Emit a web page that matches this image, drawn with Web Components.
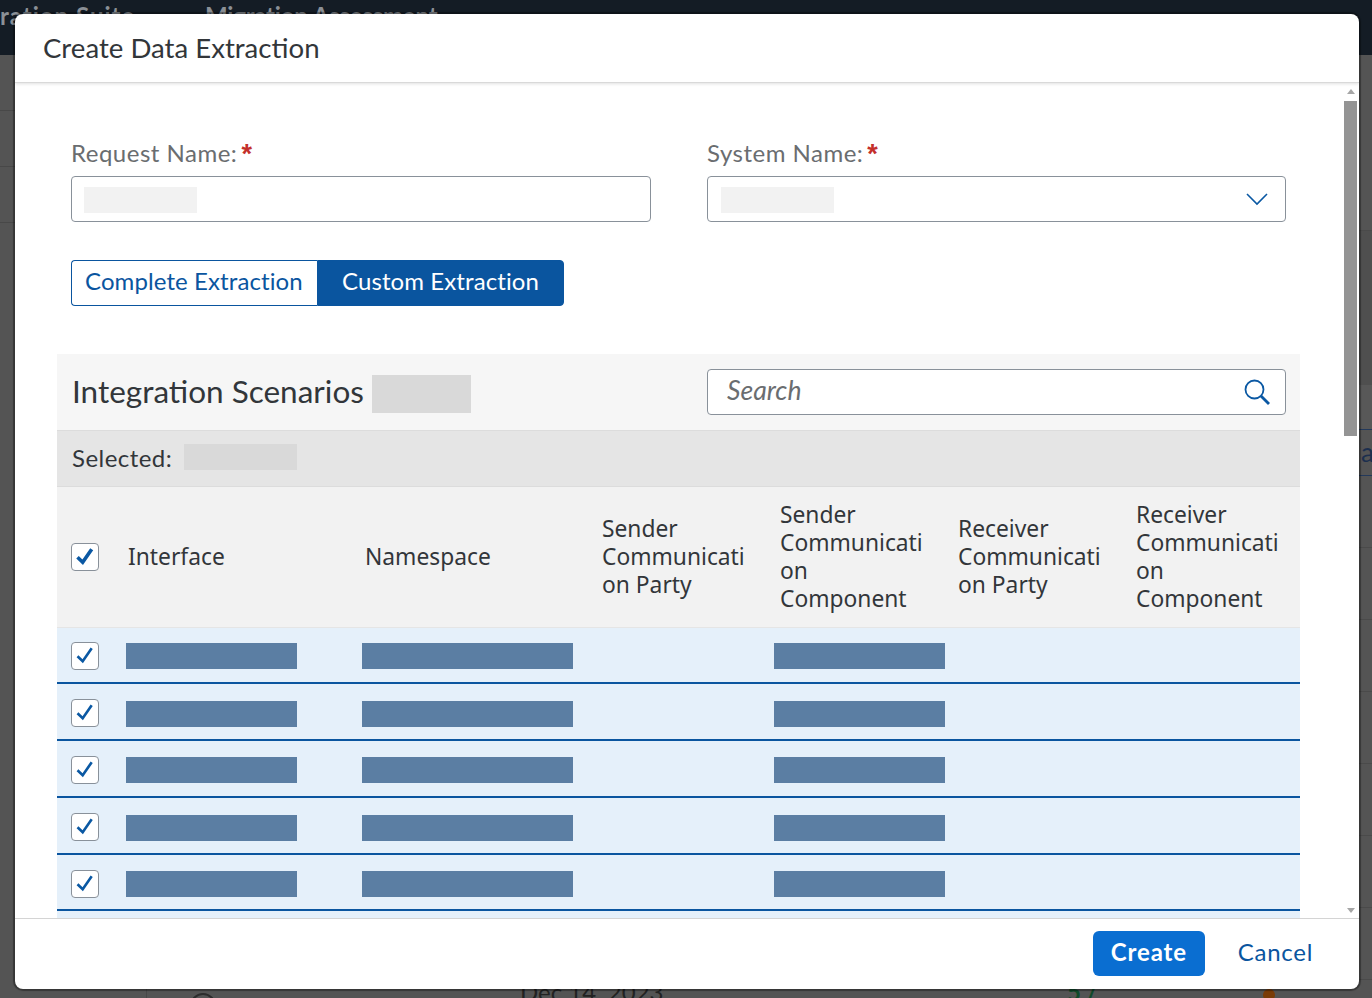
<!DOCTYPE html>
<html lang="en">
<head>
<meta charset="utf-8">
<title>Create Data Extraction</title>
<style>
  html, body { margin: 0; height: 100%; overflow: hidden; background: #545454; }
  body { font-family: Lato, "Noto Sans", sans-serif; color: #32363a; }
</style>
</head>
<body>

<app-backdrop>
  <extract-dialog heading="Create Data Extraction">
    <div>
      <field-row>
        <form-field label="Request Name:"></form-field>
        <form-field label="System Name:" dropdown></form-field>
      </field-row>
      <extract-mode></extract-mode>
      <scenario-table></scenario-table>
    </div>
  </extract-dialog>
</app-backdrop>

<script>
/* Blocked out value, used wherever the screenshot hides data */
class MaskBar extends HTMLElement {
  constructor() {
    super();
    this.attachShadow({ mode: 'open' }).innerHTML = `
      <style>
        :host { display: block; width: 113px; height: 26px; background: #f2f2f2; }
      </style>`;
  }
}

class CheckMark extends HTMLElement {
  constructor() {
    super();
    const weight = this.hasAttribute('bold') ? 3.6 : 2.6;
    this.attachShadow({ mode: 'open' }).innerHTML = `
      <style>
        :host {
          display: block;
          width: 28px; height: 28px;
          box-sizing: border-box;
          background: #fff;
          border: 1px solid #89919a;
          border-radius: 4px;
        }
        svg { display: block; width: 26px; height: 26px; }
      </style>
      <svg viewBox="0 0 26 26"><path d="M5.5 13.2l5.2 5 9-13" fill="none" stroke="#0a58a3" stroke-width="${weight}"/></svg>`;
  }
}

class FieldRow extends HTMLElement {
  constructor() {
    super();
    this.attachShadow({ mode: 'open' }).innerHTML = `
      <style>
        :host {
          display: grid;
          grid-template-columns: 580px 579px;
          gap: 56px;
          padding: 0 0 0 56px;
        }
      </style>
      <slot></slot>`;
  }
}

class FormField extends HTMLElement {
  constructor() {
    super();
    this._shadow = this.attachShadow({ mode: 'open' });
  }

  connectedCallback() {
    const dropdown = this.hasAttribute('dropdown');
    const arrow = dropdown
      ? `<svg viewBox="0 0 24 14"><path d="M2 2l10 10L22 2" fill="none" stroke="#0a58a3" stroke-width="1.6"/></svg>`
      : '';
    this._shadow.innerHTML = `
      <style>
        :host { display: block; }
        .label {
          height: 44px;
          box-sizing: border-box;
          padding-bottom: 4px;
          display: flex;
          align-items: center;
          gap: 4px;
          font-size: 24px;
          letter-spacing: .5px;
          color: #6a6d70;
        }
        .label b {
          color: #c4302b;
          font: 700 27px/1 "Liberation Sans", sans-serif;
          height: 22px;
        }
        .box {
          height: 46px;
          box-sizing: border-box;
          display: flex;
          align-items: center;
          justify-content: space-between;
          padding: 2px 16px 0 ${dropdown ? 13 : 12}px;
          background: #fff;
          border: 1px solid #89919a;
          border-radius: 4px;
        }
        svg { display: block; width: 24px; height: 14px; margin-top: -2px; }
      </style>
      <div class="label">${this.getAttribute('label')}<b>*</b></div>
      <div class="box"><mask-bar></mask-bar>${arrow}</div>`;
  }
}

class ExtractMode extends HTMLElement {
  constructor() {
    super();
    this.attachShadow({ mode: 'open' }).innerHTML = `
      <style>
        :host {
          display: flex;
          width: 493px;
          height: 46px;
          margin: 38px 0 48px 56px;
          font-size: 24px;
          letter-spacing: .1px;
        }
        div {
          display: flex;
          align-items: center;
          box-sizing: border-box;
          padding-bottom: 6px;
          border: 1px solid #0a559f;
        }
        .off {
          width: 246px;
          padding-left: 13px;
          background: #fff;
          color: #0a559f;
          border-radius: 4px 0 0 4px;
          border-right: 0;
        }
        .on {
          flex: 1;
          padding-left: 24px;
          background: #0a559f;
          color: #fff;
          border-radius: 0 4px 4px 0;
        }
      </style>
      <div class="off">Complete Extraction</div>
      <div class="on">Custom Extraction</div>`;
  }
}

class ScenarioTable extends HTMLElement {
  constructor() {
    super();
    /* [row height, checkbox top, mask top] as the rows land in the screenshot */
    const rowData = [[56, 14, 15], [57, 15, 17], [57, 15, 16], [57, 15, 17], [56, 15, 16], [57, 15, 17]];
    const rows = rowData.map(([h, c, m]) => `
      <div class="row" style="height:${h}px;--c:${c}px;--m:${m}px">
        <check-mark></check-mark>
        <mask-bar class="m1"></mask-bar>
        <mask-bar class="m2"></mask-bar>
        <span></span>
        <mask-bar class="m3"></mask-bar>
      </div>`).join('');

    this.attachShadow({ mode: 'open' }).innerHTML = `
      <style>
        :host { display: block; width: 1243px; margin-left: 42px; font-size: 24px; }
        .toolbar {
          height: 77px;
          box-sizing: border-box;
          display: flex;
          align-items: center;
          padding-left: 15px;
          background: #f6f6f6;
          border-bottom: 1px solid #dcdcdc;
        }
        .toolbar h2 { margin: -2px 0 0; font-size: 31.5px; font-weight: 400; color: #32363a; }
        .toolbar mask-bar { width: 99px; height: 38px; margin: 4px 0 0 8px; background: #d9d9d9; }
        .search {
          width: 579px; height: 46px;
          box-sizing: border-box;
          margin-left: auto;
          margin-right: 14px;
          display: flex;
          align-items: center;
          justify-content: space-between;
          padding: 0 14px 0 19px;
          background: #fff;
          border: 1px solid #89919a;
          border-radius: 4px;
          font-style: italic;
          font-size: 26.6px;
          color: #6a6d70;
        }
        .search b { font-weight: 400; margin-top: -4px; }
        .search svg { width: 28px; height: 28px; display: block; }
        .info {
          height: 56px;
          box-sizing: border-box;
          display: flex;
          align-items: center;
          gap: 12px;
          padding: 0 0 4px 15px;
          background: #e5e5e5;
          border-bottom: 1px solid #dcdcdc;
          letter-spacing: .45px;
        }
        .info span { margin-top: 2px; }
        .info mask-bar { background: #d9d9d9; }
        .head, .row {
          display: grid;
          grid-template-columns: 71px 237px 237px 178px 178px 178px 164px;
        }
        .head {
          height: 141px;
          box-sizing: border-box;
          align-items: center;
          background: #f2f2f2;
          border-bottom: 1px solid #e5e5e5;
          font-family: "Noto Sans", sans-serif;
          font-size: 22.8px;
          line-height: 28px;
        }
        .head span { max-width: 150px; overflow-wrap: anywhere; }
        check-mark { margin-left: 14px; }
        .row {
          box-sizing: border-box;
          align-items: start;
          background: #e5f0fa;
          border-bottom: 2px solid #0a559f;
        }
        .row check-mark { margin-top: var(--c); }
        .row mask-bar { background: #5b7ea3; margin-top: var(--m); }
        .m1 { width: 171px; margin-left: -2px; }
        .m2 { width: 211px; margin-left: -3px; }
        .m3 { width: 171px; margin-left: -6px; }
      </style>
      <div class="toolbar">
        <h2>Integration Scenarios</h2>
        <mask-bar></mask-bar>
        <div class="search"><b>Search</b>
          <svg viewBox="0 0 28 28"><circle cx="11.5" cy="11.5" r="9" fill="none" stroke="#0a58a3" stroke-width="1.8"/><path d="M18 18l8 8" fill="none" stroke="#0a58a3" stroke-width="2.8"/></svg>
        </div>
      </div>
      <div class="info"><span>Selected:</span> <mask-bar></mask-bar></div>
      <div class="head">
        <check-mark bold></check-mark>
        <span>Interface</span>
        <span>Namespace</span>
        <span>Sender Communication Party</span>
        <span>Sender Communication Component</span>
        <span>Receiver Communication Party</span>
        <span>Receiver Communication Component</span>
      </div>
      ${rows}`;
  }
}

class ExtractDialog extends HTMLElement {
  constructor() {
    super();
    this._shadow = this.attachShadow({ mode: 'open' });
  }

  connectedCallback() {
    this._shadow.innerHTML = `
      <style>
        :host {
          position: absolute;
          left: 15px; top: 14px;
          width: 1344px; height: 975px;
          display: flex;
          flex-direction: column;
          background: #fff;
          border-radius: 8px;
          box-shadow: 0 0 1px 2px rgba(0,0,0,.35);
          overflow: hidden;
        }
        header {
          flex: 0 0 69px;
          box-sizing: border-box;
          display: flex;
          align-items: center;
          padding: 0 0 2px 28px;
          font-size: 27.6px;
          color: #32363a;
          border-bottom: 1px solid #d9d9d9;
          box-shadow: 0 1px 3px rgba(0,0,0,.12);
          position: relative;
        }
        .middle { flex: 1; display: flex; min-height: 0; }
        .content { flex: 1; overflow: hidden; padding-top: 49px; }
        .bar {
          flex: 0 0 13px;
          margin-right: 2px;
          display: flex;
          flex-direction: column;
          align-items: center;
          justify-content: space-between;
          padding: 6px 0 5px;
          box-sizing: border-box;
        }
        .bar i { display: block; width: 0; height: 0; border: 4px solid transparent; }
        .bar .up { border-top: 0; border-bottom: 5px solid #a6a6a6; }
        .bar .down { border-bottom: 0; border-top: 5px solid #a6a6a6; }
        .thumb { width: 13px; height: 335px; background: #949494; margin: 7px 0 auto; }
        footer {
          flex: 0 0 71px;
          box-sizing: border-box;
          display: flex;
          align-items: flex-start;
          justify-content: flex-end;
          padding: 12px 46px 0 0;
          border-top: 1px solid #d4d4d4;
          font-size: 24px;
        }
        button {
          height: 45px;
          font: inherit;
          border: 0;
          border-radius: 6px;
          background: none;
          color: #0a559f;
          padding: 0 0 5px;
        }
        .create { width: 112px; background: #0a6ed1; color: #fff; font-weight: 700; letter-spacing: .9px; }
        .cancel { margin-left: 33px; letter-spacing: .7px; }
      </style>
      <header>${this.getAttribute('heading')}</header>
      <div class="middle">
        <div class="content"><slot></slot></div>
        <div class="bar"><i class="up"></i><div class="thumb"></div><i class="down"></i></div>
      </div>
      <footer>
        <button class="create">Create</button>
        <button class="cancel">Cancel</button>
      </footer>`;
  }
}

/* The dimmed application behind the dialog */
class AppBackdrop extends HTMLElement {
  constructor() {
    super();
    this.attachShadow({ mode: 'open' }).innerHTML = `
      <style>
        :host { display: block; height: 100vh; background: #545454; overflow: hidden; font-size: 24px; }
        .shell {
          height: 55px;
          box-sizing: border-box;
          background: #141c25;
          color: #8b9096;
          font-weight: 700;
          display: flex;
          padding-top: 2px;
        }
        .shell span { line-height: 28px; white-space: nowrap; }
        .shell .suite { width: 205px; letter-spacing: 1px; }
        .shell .assess { letter-spacing: -.2px; }
        .stage { height: 920px; display: flex; justify-content: space-between; }
        .left { width: 15px; }
        .left div { height: 55px; border-bottom: 1px solid #484848; }
        .right { width: 13px; }
        .right div { box-sizing: border-box; border-bottom: 1px solid #4a4a4a; }
        .right .nav { height: 46px; border-bottom: 1px solid #23395b; line-height: 44px; color: #1c2f4e; padding-left: 2px; font-size: 26px; overflow: hidden; }
        .right .tall { height: 72px; }
        .lower { display: grid; grid-template-columns: 147px 373px 547px 196px 1fr; height: 23px; overflow: hidden; }
        .lower > div { padding-top: 3px; line-height: 28px; white-space: nowrap; color: #222; }
        .lower .first { border-right: 1px solid #484848; box-sizing: border-box; }
        .dot { display: block; width: 26px; height: 26px; box-sizing: border-box; border: 2px solid #2c2c2c; border-radius: 50%; margin: 15px 0 0 43px; }
        .lower .count { color: #0f4a2a; font-weight: 700; }
        .pin { display: block; width: 12px; height: 12px; border-radius: 50%; background: #7a3b07; margin-top: 11px; }
      </style>
      <div class="shell"><span class="suite">ration Suite</span><span class="assess">Migration Assessment</span></div>
      <div class="stage">
        <div class="left"><div></div><div></div><div></div></div>
        <div class="right">
          <div style="height:176px"></div>
          <div style="height:154px;background:#4f4f4f;border-bottom:0"></div>
          <div style="height:45px;background:#585858;border-bottom:1px solid #23395b"></div>
          <div class="nav">a</div>
          <div class="tall"></div><div class="tall"></div><div class="tall"></div>
          <div class="tall"></div><div class="tall"></div><div class="tall"></div><div class="tall"></div>
        </div>
      </div>
      <div class="lower">
        <div class="first"></div>
        <div><i class="dot"></i></div>
        <div>Dec 14, 2023</div>
        <div class="count">5 /</div>
        <div><i class="pin"></i></div>
      </div>
      <slot></slot>`;
  }
}

customElements.define('mask-bar', MaskBar);
customElements.define('check-mark', CheckMark);
customElements.define('field-row', FieldRow);
customElements.define('form-field', FormField);
customElements.define('extract-mode', ExtractMode);
customElements.define('scenario-table', ScenarioTable);
customElements.define('extract-dialog', ExtractDialog);
customElements.define('app-backdrop', AppBackdrop);
</script>
</body>
</html>
